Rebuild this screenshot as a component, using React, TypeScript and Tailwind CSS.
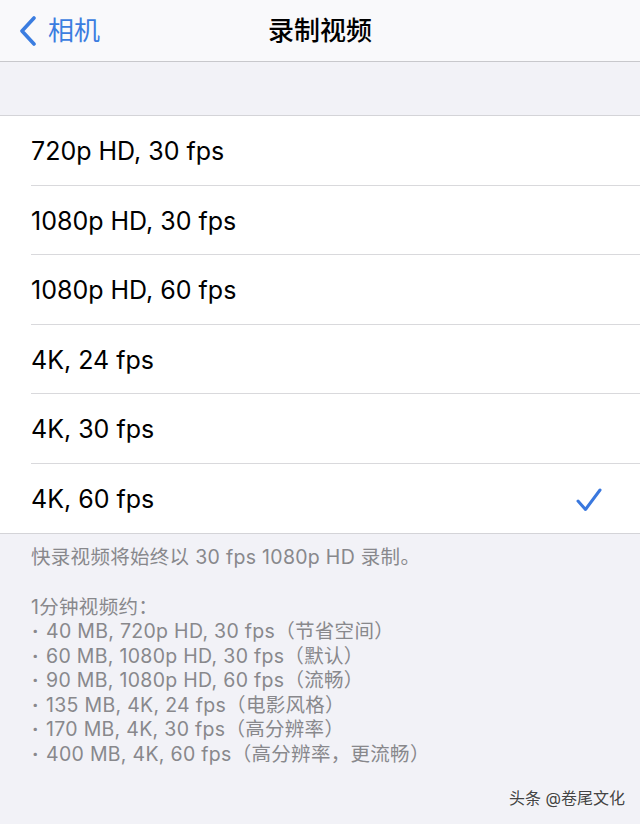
const options = [
  '720p HD, 30 fps',
  '1080p HD, 30 fps',
  '1080p HD, 60 fps',
  '4K, 24 fps',
  '4K, 30 fps',
  '4K, 60 fps',
];

const sizes = [
  '40 MB, 720p HD, 30 fps（节省空间）',
  '60 MB, 1080p HD, 30 fps（默认）',
  '90 MB, 1080p HD, 60 fps（流畅）',
  '135 MB, 4K, 24 fps（电影风格）',
  '170 MB, 4K, 30 fps（高分辨率）',
  '400 MB, 4K, 60 fps（高分辨率，更流畅）',
];

const font = "font-['Inter','Noto_Sans_CJK_SC',sans-serif]";

export default function App() {
  return (
    <div className={`w-[640px] h-[824px] bg-[#f2f2f7] ${font} relative overflow-hidden`}>
      {/* nav bar */}
      <div className="h-[62px] bg-[#f9f9fb] border-b border-[#c8c8cc] flex items-center relative">
        <div className="flex items-center pl-[18px] text-[#3b7de0]">
          <svg width="20" height="30" viewBox="0 0 20 30" fill="none">
            <path d="M16 2 L4 15 L16 28" stroke="currentColor" strokeWidth="3.6" strokeLinecap="round" strokeLinejoin="round" />
          </svg>
          <span className="ml-[10px] text-[26px] leading-none">相机</span>
        </div>
        <div className="absolute inset-x-0 top-0 h-full flex items-center justify-center pointer-events-none">
          <span className="text-[26px] font-medium text-black leading-none">录制视频</span>
        </div>
      </div>

      <div className="h-[54px] border-b border-[#d4d4d8]" />

      {/* options */}
      <div className="bg-white border-b border-[#d4d4d8]">
        {options.map((o, i) => (
          <div key={o} className="pl-[31px]">
            <div className={`h-[69.5px] pt-[3px] flex items-center justify-between pr-[38px] ${i < options.length - 1 ? 'border-b border-[#d9d9dc]' : ''}`}>
              <span className="text-[25px] text-black leading-none">{o}</span>
              {i === options.length - 1 && (
                <svg width="26" height="24" viewBox="0 0 26 24" fill="none">
                  <path d="M2 13 L9.5 21.5 L24 2" stroke="#3a78de" strokeWidth="3" strokeLinecap="round" strokeLinejoin="round" />
                </svg>
              )}
            </div>
          </div>
        ))}
      </div>

      {/* footer */}
      <div className="px-[31px] pt-[11px] text-[19.5px] leading-[24.5px] tracking-[0.3px] text-[#88888c]">
        <div>快录视频将始终以 30 fps 1080p HD 录制。</div>
        <div className="mt-[25px]">1分钟视频约：</div>
        {sizes.map((s) => (
          <div key={s} className="flex">
            <span className="w-[15px] pl-[1px] font-bold">·</span>
            <span>{s}</span>
          </div>
        ))}
      </div>

      <div className="absolute right-[15px] bottom-[14px] text-[16px] text-[#444] [text-shadow:0_0_2px_#fff]">
        头条 @卷尾文化
      </div>
    </div>
  );
}
